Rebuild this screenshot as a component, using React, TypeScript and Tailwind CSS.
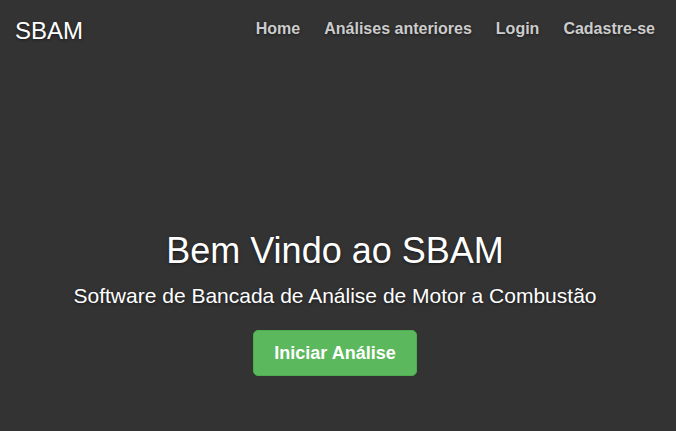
export default function App() {
  const links = ["Home", "Análises anteriores", "Login", "Cadastre-se"]

  return (
    <div className="flex h-[431px] w-full flex-col bg-[#333333] text-white [font-family:'Liberation_Sans',Arial,sans-serif] [text-shadow:0_1px_3px_rgba(0,0,0,0.5)]">
      <header className="flex items-start justify-between px-[15px]">
        <h3 className="mt-[18px] text-[24px] leading-[26px]">SBAM</h3>
        <nav className="mt-[18px] flex gap-[24px] pr-[6px]">
          {links.map((l) => (
            <a key={l} href="#" className="text-[16px] font-bold leading-[22px] text-[#cccccc]">
              {l}
            </a>
          ))}
        </nav>
      </header>

      <main className="flex flex-col items-center pr-[6px] pt-[187px] text-center">
        <h1 className="text-[36px] leading-[40px]">Bem Vindo ao SBAM</h1>
        <p className="mt-[10px] text-[21px] leading-[30px]">
          Software de Bancada de Análise de Motor a Combustão
        </p>
        <button className="mt-[19px] h-[46px] rounded-[5px] border border-[#4cae4c] bg-[#5cb85c] px-[20px] text-[18px] font-bold text-white">
          Iniciar Análise
        </button>
      </main>
    </div>
  )
}
